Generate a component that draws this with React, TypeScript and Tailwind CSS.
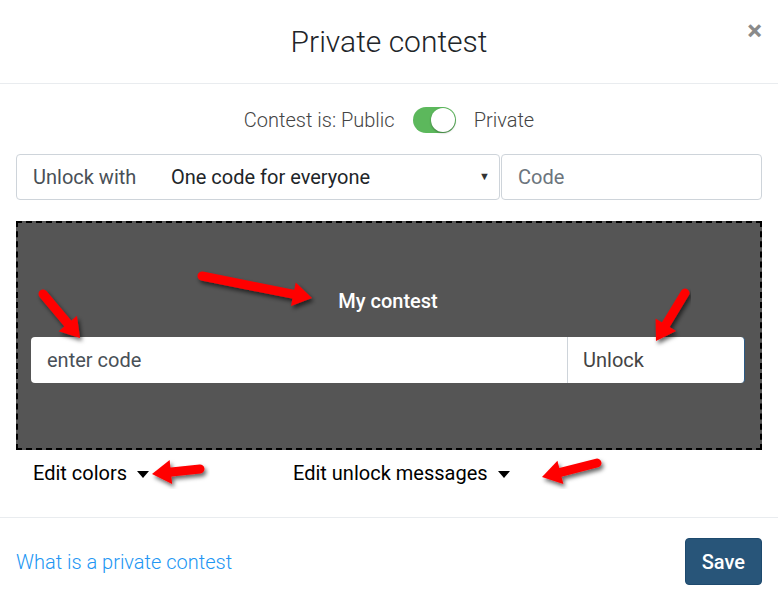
import React from 'react';

type Pt = [number, number];

// red annotation arrow, tail -> tip
function Arrow({ from, to }: { from: Pt; to: Pt }) {
  const [x1, y1] = from;
  const [x2, y2] = to;
  const dx = x2 - x1;
  const dy = y2 - y1;
  const len = Math.hypot(dx, dy);
  const ux = dx / len;
  const uy = dy / len;
  const head = 19;
  const half = 12;
  const bx = x2 - ux * head;
  const by = y2 - uy * head;
  const pts = [
    [x2, y2],
    [bx - uy * half, by + ux * half],
    [bx + uy * half, by - ux * half],
  ]
    .map((p) => p.join(','))
    .join(' ');
  return (
    <g filter="url(#arrowShadow)">
      <line x1={x1} y1={y1} x2={bx + ux * 2} y2={by + uy * 2} stroke="#ff0000" strokeWidth={9} strokeLinecap="round" />
      <polygon points={pts} fill="#ff0000" />
    </g>
  );
}

function Caret() {
  return <span className="inline-block w-0 h-0 border-l-[6px] border-r-[6px] border-t-[7px] border-l-transparent border-r-transparent border-t-black ml-[10px] align-middle" />;
}

export default function App() {
  return (
    <div className="relative w-[778px] h-[598px] bg-white text-[#212529] overflow-hidden" style={{ fontFamily: 'Roboto, "Liberation Sans", sans-serif' }}>
      {/* Header */}
      <div className="relative h-[84px] border-b border-[#e9ecef] flex items-center justify-center">
        <h1 className="text-[30px] leading-none font-light text-[#212529]">Private contest</h1>
        <button className="absolute right-[16px] top-[17px] text-[28px] leading-none font-bold text-[#8a8a8a]">×</button>
      </div>

      {/* Body */}
      <div className="px-4 pt-[23px]">
        <div className="flex items-center justify-center gap-[18px] text-[20px] font-light text-[#444] h-[26px]">
          <span>Contest is: Public</span>
          <span className="relative w-[43px] h-[26px] rounded-full bg-[#5cb85c]">
            <span className="absolute right-[1px] top-[1px] w-[24px] h-[24px] rounded-full bg-white shadow-[0_1px_2px_rgba(0,0,0,0.35)]" />
          </span>
          <span>Private</span>
        </div>

        <div className="flex gap-[1px] mt-[21px]">
          <div className="w-[484px] h-[46px] border border-[#ced4da] rounded flex items-center pl-4 pr-[9px] text-[20px]">
            <span className="text-[#495057] w-[138px]">Unlock with</span>
            <span className="flex-1 text-[#212529]">One code for everyone</span>
            <span className="text-[11px] text-[#333]">▼</span>
          </div>
          <div className="flex-1 h-[46px] border border-[#ced4da] rounded flex items-center px-4 text-[20px] text-[#6c757d]">Code</div>
        </div>

        {/* Preview */}
        <div className="mt-[21px] h-[229px] bg-[#555555] border-2 border-dashed border-black flex flex-col justify-center pl-[13px] pr-[15px]">
          <div className="text-center text-white text-[20px] font-medium mb-[21px] mt-[-2px]">My contest</div>
          <div className="flex h-[46px]">
            <div className="flex-1 bg-white rounded-l flex items-center pl-4 text-[20px] text-[#495057]">enter code</div>
            <div className="w-[178px] bg-white rounded-r border-l border-[#ced4da] border-r border-r-[#2b5a84] flex items-center pl-[15px] text-[20px] text-[#444]">Unlock</div>
          </div>
        </div>

        <div className="flex text-[20px] text-black mt-[11px] pl-[17px] h-[24px] items-center">
          <span className="w-[260px]">
            Edit colors
            <Caret />
          </span>
          <span>
            Edit unlock messages
            <Caret />
          </span>
        </div>
      </div>

      {/* Footer */}
      <div className="mt-[32px] border-t border-[#e9ecef] px-4 pt-[20px] flex items-center justify-between">
        <a className="text-[20px] font-light text-[#2196f3]">What is a private contest</a>
        <button className="h-[47px] px-[16px] rounded bg-[#285579] border border-[#1e4a6e] text-white text-[20px] font-medium">Save</button>
      </div>

      {/* annotation arrows */}
      <svg className="absolute inset-0 pointer-events-none" width={778} height={598}>
        <defs>
          <filter id="arrowShadow" x="-20%" y="-20%" width="140%" height="140%">
            <feDropShadow dx="2" dy="3" stdDeviation="2" floodColor="#000" floodOpacity="0.6" />
          </filter>
        </defs>
        <Arrow from={[202, 276]} to={[312, 298]} />
        <Arrow from={[43, 294]} to={[80, 338]} />
        <Arrow from={[685, 293]} to={[656, 341]} />
        <Arrow from={[200, 469]} to={[152, 474]} />
        <Arrow from={[597, 463]} to={[542, 477]} />
      </svg>
    </div>
  );
}
